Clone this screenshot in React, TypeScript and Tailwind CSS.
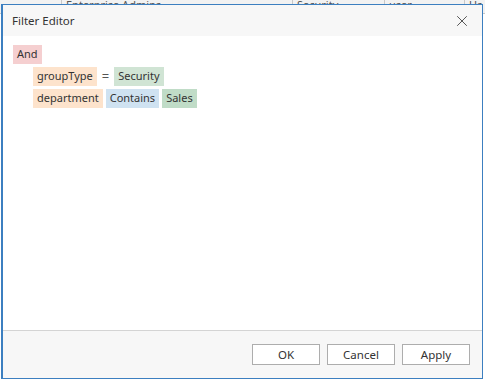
import { X } from 'lucide-react'

const font = { fontFamily: '"Noto Sans", "Open Sans", sans-serif' }

function Token({ text, className }: { text: string; className: string }) {
  return <span className={`flex h-[19px] items-center px-[4px] ${className}`}>{text}</span>
}

function FooterButton({ label }: { label: string }) {
  return (
    <button
      type="button"
      className="flex h-[21px] w-[68px] items-center justify-center border border-[#adadad] bg-white text-[11.5px] text-[#333]"
    >
      {label}
    </button>
  )
}

export default function App() {
  return (
    <div className="relative h-[380px] w-[485px] overflow-hidden bg-white text-[11px] text-[#333]" style={font}>
      {/* grid behind the dialog */}
      <div className="flex h-[14px] border-b border-[#c8c8c8] bg-[#f2f2f2] text-[#555] leading-[10px]">
        <div className="w-[62px] border-r border-[#c8c8c8]" />
        <div className="w-[231px] border-r border-[#c8c8c8] pl-[4px]">Enterprise Admins</div>
        <div className="w-[92px] border-r border-[#c8c8c8] pl-[4px]">Security</div>
        <div className="w-[80px] border-r border-[#c8c8c8] pl-[4px]">user</div>
        <div className="pl-[4px]">Us</div>
      </div>

      {/* dialog */}
      <div className="absolute left-[1px] top-[4px] flex h-[375px] w-[482px] flex-col border border-l-2 border-[#3c7fc0] bg-white">
        <div className="flex h-[31px] items-center justify-between bg-[#f7f7f7] pl-[9px] pr-[11px]">
          <span className="text-[11.5px] text-[#333]">Filter Editor</span>
          <X size={18} strokeWidth={1.2} className="text-[#444]" />
        </div>

        <div className="flex flex-1 flex-col gap-[3px] px-[10px] pt-[9px]">
          <div className="flex">
            <Token text="And" className="bg-[#f5cfd0]" />
          </div>
          <div className="flex gap-[3px] pl-[20px]">
            <Token text="groupType" className="bg-[#fde3cc]" />
            <span className="flex h-[19px] items-center px-[2px] text-[13px] text-[#555]">=</span>
            <Token text="Security" className="bg-[#d0e4d4]" />
          </div>
          <div className="flex gap-[3px] pl-[20px]">
            <Token text="department" className="bg-[#fde3cc]" />
            <Token text="Contains" className="bg-[#cfe2f1]" />
            <Token text="Sales" className="bg-[#c0dcc7]" />
          </div>
        </div>

        <div className="flex h-[48px] items-center justify-end gap-[7px] border-t border-[#d4d4d4] bg-[#f7f7f7] pr-[12px]">
          <FooterButton label="OK" />
          <FooterButton label="Cancel" />
          <FooterButton label="Apply" />
        </div>
      </div>
    </div>
  )
}
